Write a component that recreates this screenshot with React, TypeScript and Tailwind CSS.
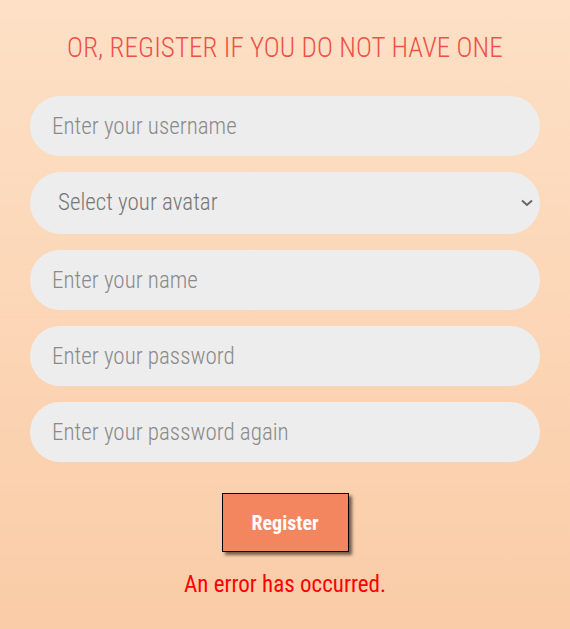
import React from "react";

const font = { fontFamily: 'Roboto, "Roboto Condensed", sans-serif', fontStretch: "condensed" as const };

export default function App() {
  const inputCls =
    "w-full h-[60px] rounded-full bg-[#ededed] px-[22px] text-[23px] font-light text-[#555] placeholder:text-[#8a8a8a] outline-none";
  return (
    <div
      className="min-h-screen w-full bg-gradient-to-b from-[#fde0c6] to-[#facca7] flex flex-col items-center pt-[32px]"
      style={font}
    >
      <h2 className="text-[27px] leading-[32px] font-light text-[#ef5048] tracking-[0.1px]">OR, REGISTER IF YOU DO NOT HAVE ONE</h2>
      <form className="w-[510px] mt-[32px] flex flex-col gap-[16px]" onSubmit={(e) => e.preventDefault()}>
        <input className={inputCls} placeholder="Enter your username" />
        <div className="relative">
          <select
            defaultValue=""
            className="appearance-none w-full h-[62px] rounded-full bg-[#ededed] pl-[28px] pr-[40px] text-[23px] font-light text-[#777] outline-none"
          >
            <option value="" disabled>
              Select your avatar
            </option>
          </select>
          <svg
            className="absolute right-[7px] top-[27px] pointer-events-none"
            width="12"
            height="8"
            viewBox="0 0 12 8"
            fill="none"
            stroke="#666"
            strokeWidth="2"
          >
            <path d="M1 1.5 L6 6 L11 1.5" />
          </svg>
        </div>
        <input className={inputCls} placeholder="Enter your name" />
        <input className={inputCls} type="password" placeholder="Enter your password" />
        <input className={inputCls} type="password" placeholder="Enter your password again" />
        <div className="flex justify-center mt-[15px]">
          <button
            type="submit"
            className="w-[127px] h-[59px] bg-[#f4865f] border border-black text-white font-bold text-[20px] shadow-[3px_3px_3px_rgba(0,0,0,0.55)]"
          >
            Register
          </button>
        </div>
        <p className="text-center text-[#ff0000] text-[23px] leading-[28px] mt-[3px]">An error has occurred.</p>
      </form>
    </div>
  );
}
